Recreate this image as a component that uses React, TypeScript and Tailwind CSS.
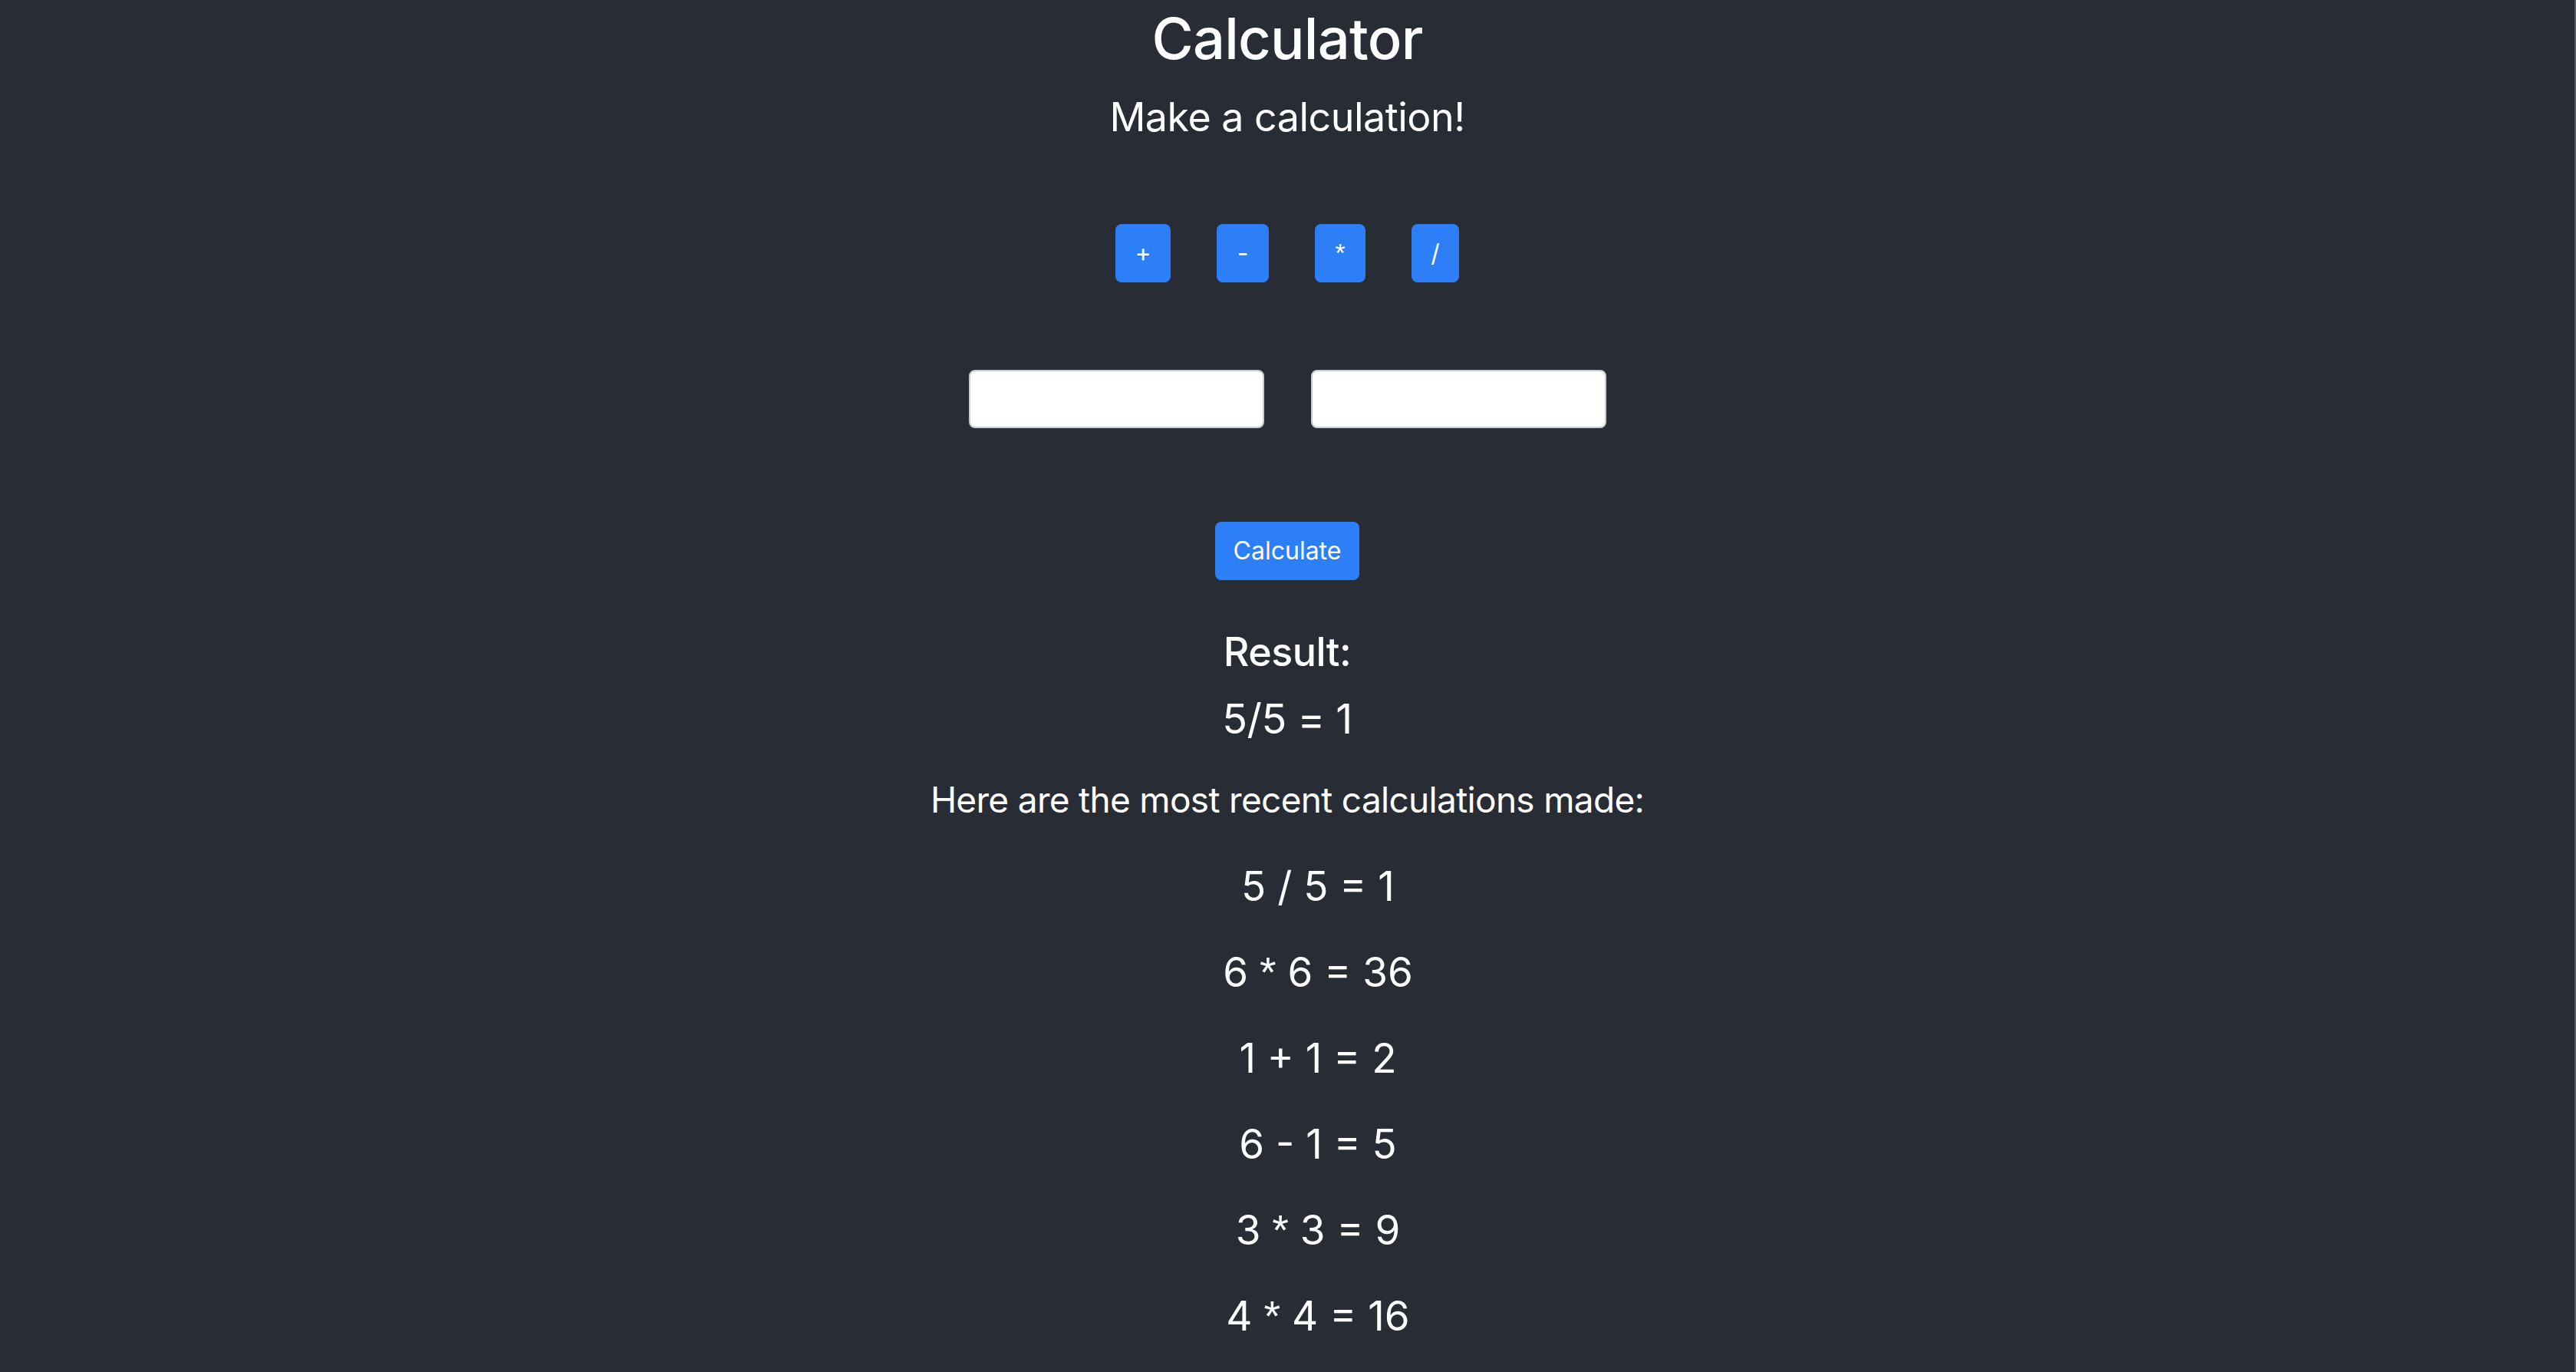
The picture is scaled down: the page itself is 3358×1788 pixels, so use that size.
import React from "react";

const ops = [
  { label: "+", w: "w-[72px]" },
  { label: "-", w: "w-[68px]" },
  { label: "*", w: "w-[66px]" },
  { label: "/", w: "w-[62px]" },
];

const history = ["5 / 5 = 1", "6 * 6 = 36", "1 + 1 = 2", "6 - 1 = 5", "3 * 3 = 9", "4 * 4 = 16"];

function Expr({ text }: { text: string }) {
  const parts = text.split("*");
  return (
    <>
      {parts.map((p, i) => (
        <React.Fragment key={i}>
          {i > 0 && (
            <span style={{ fontFamily: '"Liberation Sans", Arial, sans-serif' }} className="text-[1.05em]">
              *
            </span>
          )}
          {p}
        </React.Fragment>
      ))}
    </>
  );
}

export default function App() {
  return (
    <div
      className="min-h-screen w-full bg-[#282c34] text-white flex flex-col items-center text-center border-r-2 border-[#595a5e]"
      style={{ fontFamily: 'Inter, "Noto Sans", sans-serif' }}
    >
      <h1 className="m-0 text-[74px] leading-[100px] font-medium tracking-[-0.01em]">Calculator</h1>
      <p className="mt-[21px] text-[52px] leading-[64px] font-normal tracking-[-0.01em]">Make a calculation!</p>

      <div className="mt-[107px] flex flex-row gap-[60px]">
        {ops.map((o) => (
          <button
            key={o.label}
            className={`${o.w} h-[76px] rounded-[8px] bg-[#2d7ff8] text-white text-[32px] leading-[48px] flex items-center justify-center`}
          >
            <Expr text={o.label} />
          </button>
        ))}
      </div>

      <div className="mt-[114px] flex flex-row gap-[61px]">
        <input
          type="text"
          className="w-[385px] h-[76px] bg-white rounded-[8px] border-2 border-[#c9cdd3] outline-none"
        />
        <input
          type="text"
          className="w-[385px] h-[76px] bg-white rounded-[8px] border-2 border-[#c9cdd3] outline-none"
        />
      </div>

      <button className="mt-[122px] w-[188px] h-[76px] rounded-[8px] bg-[#2d7ff8] text-white text-[32px] leading-[48px] flex items-center justify-center">
        Calculate
      </button>

      <h4 className="mt-[63px] text-[52px] leading-[62px] font-medium tracking-[-0.01em]">Result:</h4>
      <p className="mt-[23px] text-[54px] leading-[66px] font-normal tracking-[-0.01em]">5/5 = 1</p>

      <p className="mt-[43px] text-[46px] leading-[58px] font-normal tracking-[-0.015em]">
        Here are the most recent calculations made:
      </p>

      <ul className="mt-[28px] pl-[80px] list-none m-0">
        {history.map((h) => (
          <li key={h} className="text-[53px] leading-[112px] font-normal">
            <Expr text={h} />
          </li>
        ))}
      </ul>
    </div>
  );
}
